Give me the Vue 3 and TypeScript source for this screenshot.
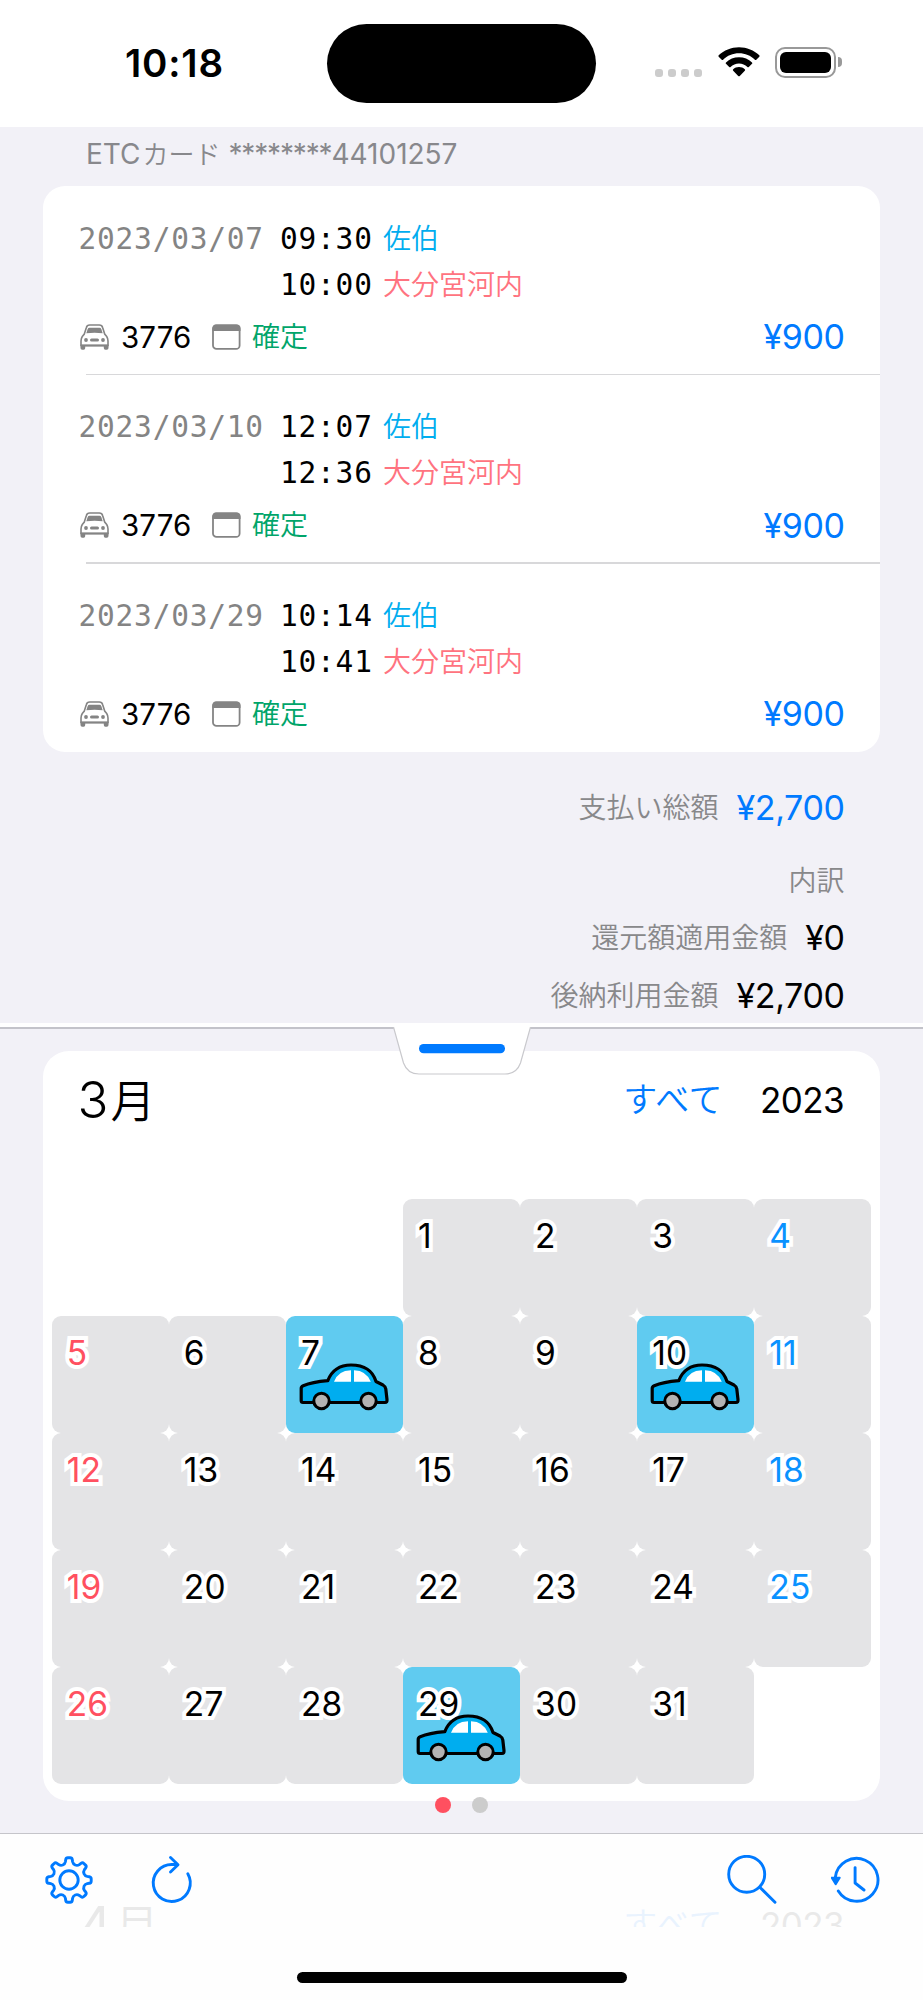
<script setup lang="ts">
interface Trip {
  date: string
  entryTime: string
  entry: string
  exitTime: string
  exit: string
  car: string
  status: string
  fee: string
}

interface Day {
  n: number
  weekday: number
  trip: boolean
}

const trips: Trip[] = [
  ['2023/03/07', '09:30', '10:00'],
  ['2023/03/10', '12:07', '12:36'],
  ['2023/03/29', '10:14', '10:41'],
].map(([date, entryTime, exitTime]) => ({
  date,
  entryTime,
  exitTime,
  entry: '佐伯',
  exit: '大分宮河内',
  car: '3776',
  status: '確定',
  fee: '¥900',
}))

const firstWeekday = 3
const tripDays = [7, 10, 29]
const days: Day[] = Array.from({ length: 31 }, (_, i) => ({
  n: i + 1,
  weekday: (i + firstWeekday) % 7,
  trip: tripDays.includes(i + 1),
}))

function polar(x: number, y: number, deg: number): string {
  const a = (deg * Math.PI) / 180
  const px = x * Math.cos(a) - y * Math.sin(a)
  const py = x * Math.sin(a) + y * Math.cos(a)
  return `${px.toFixed(2)} ${py.toFixed(2)}`
}

// Eight rounded teeth joined by shallow valleys.
function gearPath(): string {
  let d = ''
  for (let i = 0; i < 8; i++) {
    const p = (x: number, y: number) => polar(x, y, i * 45)
    d += `${i ? 'L' : 'M'}${p(-3.6, -18.2)}L${p(-3.3, -20.2)}Q${p(-3, -22.2)} ${p(-1.2, -22.2)}L${p(1.2, -22.2)}`
    d += `Q${p(3, -22.2)} ${p(3.3, -20.2)}L${p(3.6, -18.2)}Q${p(4.1, -15.9)} ${p(6.2, -15)}`
    d += `Q${p(8.4, -14.1)} ${polar(-3.6, -18.2, (i + 1) * 45)}`
  }
  return d + 'Z'
}
const gear = gearPath()
</script>

<template>
  <main class="screen">
    <header class="status">
      <div class="clock">10:18</div>
      <div class="island"></div>
      <div class="signals">
        <div class="cell-dots"><i v-for="k in 4" :key="k"></i></div>
        <svg class="wifi" width="42" height="30" viewBox="0 0 42 30">
          <path d="M21 0.3C13.2 0.3 6 3.3 0.7 8.3q-.7.7 0 1.4l3 3q.7.7 1.4 0C9.300 8.600 14.900 6.300 21 6.300s11.700 2.300 15.900 6.400q.7.700 1.400 0l3-3q.7-.7 0-1.400C36 3.300 28.800.3 21 .3z" />
          <path d="M21 10.300c-5 0-9.600 1.900-13 5.100q-.8.700 0 1.400l3.200 3.100q.7.700 1.400 0c2.200-2 5.200-3.300 8.400-3.300s6.200 1.300 8.400 3.300q.7.700 1.400 0l3.200-3.100q.8-.7 0-1.400c-3.400-3.200-8-5.100-13-5.100z" />
          <path d="M21 20.100c-2.300 0-4.300.9-5.800 2.200q-.8.700 0 1.400l5 5.200q.8.800 1.600 0l5-5.200q.8-.7 0-1.400c-1.500-1.300-3.500-2.200-5.800-2.200z" />
        </svg>
        <div class="battery"><div class="shell"><div class="charge"></div></div><i class="nub"></i></div>
      </div>
    </header>

    <section class="history">
      <h2 class="card-name">ETC<span class="kana">カード</span> <span class="stars">********</span>44101257</h2>
      <div class="panel trips">
        <article v-for="trip in trips" :key="trip.date" class="trip">
          <div class="times">
            <span class="mono date">{{ trip.date }}</span>
            <span class="mono">{{ trip.entryTime }}</span>
            <span class="jp entry">{{ trip.entry }}</span>
          </div>
          <div class="times">
            <span class="mono date"></span>
            <span class="mono">{{ trip.exitTime }}</span>
            <span class="jp exit">{{ trip.exit }}</span>
          </div>
          <div class="meta">
            <svg class="front-car" width="29" height="26" viewBox="0 0 29 26">
              <path d="M4.300 10 6.300 3.700Q7 1 9.700 1h9.600Q22 1 22.700 3.700l2 6.300 2 2.500q1.300 2 1.300 4.500v4.500H1V17q0-2.500 1.300-4.500z" fill="none" stroke="#848484" stroke-width="1.600" />
              <path d="M6.300 9.200 7.700 5q.5-1.300 1.800-1.300h10q1.300 0 1.800 1.300l1.400 4.200q-8-.8-16.400 0zM.5 20.500h28V24q0 1.800-1.700 1.800h-1.500q-1.500 0-1.500-1.800v-1.500H5.200V24q0 1.800-1.500 1.800H2.200Q.5 25.800.5 24z" fill="#848484" />
              <circle cx="6" cy="16" r="1.900" fill="#848484" />
              <circle cx="23" cy="16" r="1.900" fill="#848484" />
              <rect x="10" y="14.500" width="9" height="3" rx="1.500" fill="#848484" />
            </svg>
            <span class="car-no">{{ trip.car }}</span>
            <svg class="window" width="29" height="26" viewBox="0 0 29 26">
              <rect x="1" y="1.300" width="26.600" height="23.600" rx="3.500" fill="none" stroke="#848484" stroke-width="1.800" />
              <path d="M.5 7V4q0-3.500 3.500-3.500h20.500Q28.500.5 28.500 4v3z" fill="#848484" />
            </svg>
            <span class="jp state">{{ trip.status }}</span>
            <span class="fee">{{ trip.fee }}</span>
          </div>
        </article>
      </div>
      <div class="totals">
        <div class="total"><span class="jp">支払い総額</span><b class="blue">¥2,700</b></div>
        <div class="total head"><span class="jp">内訳</span></div>
        <div class="total"><span class="jp">還元額適用金額</span><b>¥0</b></div>
        <div class="total"><span class="jp">後納利用金額</span><b>¥2,700</b></div>
      </div>
    </section>

    <section class="calendar">
      <svg class="grip" width="140" height="49" viewBox="0 0 140 49">
        <path d="M1.500 0 11.500 36Q15.500 47 27 47H113Q124.500 47 128.500 36L138.500 0" fill="#fff" stroke="#c9c9cd" stroke-width="1.200" />
        <rect x="27" y="17" width="86" height="9.300" rx="4.600" fill="#007aff" />
      </svg>
      <div class="panel month">
        <div class="month-head">
          <h1><span>3</span><span class="jp tsuki">月</span></h1>
          <span class="jp all">すべて</span>
          <span class="year">2023</span>
        </div>
        <div class="days">
          <div
            v-for="day in days"
            :key="day.n"
            class="day"
            :class="{ first: day.n === 1, sun: day.weekday === 0, sat: day.weekday === 6, busy: day.trip }"
          >
            <span class="num">{{ day.n }}</span>
            <svg v-if="day.trip" class="side-car" width="90" height="48" viewBox="0 0 90 48">
              <path d="M4 39.500Q2.200 39.500 2.200 37.500V25.500Q2.200 23.500 4.200 22.700 13 19 28.800 17.600 35 2 52 2 72 2 77 18.500L84 22Q86.500 23.500 86.800 26L88 36.500Q88.300 39.500 86 39.500Z" fill="#00adef" stroke="#000" stroke-width="3.200" stroke-linejoin="round" />
              <path d="M35 18.800Q39 7.400 52 7.200V18.800ZM55 7.200Q67.500 7.600 71.800 18.800H55Z" fill="#fff" />
              <circle cx="22.500" cy="38" r="7.700" fill="#b3b3b3" stroke="#000" stroke-width="3" />
              <circle cx="69.500" cy="38" r="7.700" fill="#b3b3b3" stroke="#000" stroke-width="3" />
            </svg>
          </div>
        </div>
      </div>
      <div class="pager"><i class="on"></i><i></i></div>
    </section>

    <footer class="toolbar">
      <div class="next-month">
        <span class="next-name">4<span class="jp tsuki">月</span></span>
        <span class="jp all">すべて</span>
        <span class="year">2023</span>
      </div>
      <nav class="icons">
        <svg width="50" height="50" viewBox="-25 -25 50 50">
          <path :d="gear" />
          <circle r="9.200" />
        </svg>
        <svg class="refresh" width="50" height="50" viewBox="-25 -25 50 50">
          <path d="M15.800-6.200A18.500 18.500 0 1 1 0-15.500H5.500M-1.500-22.500 6-15.300-1.500-8" />
        </svg>
        <svg class="search" width="50" height="50" viewBox="-25 -25 50 50">
          <circle cx="-5.300" cy="-5.700" r="18" />
          <path d="M7.800 7.200 23 22.300" />
        </svg>
        <svg class="recent" width="50" height="50" viewBox="-25 -25 50 50">
          <path d="M-20.700-2.500A21.400 21.400 0 1 1-17.700 11M-.9-12.400V3L8 10" />
          <path d="M-24.300-2.300h8L-20.300 4.200z" fill="#007aff" stroke-width="2" />
        </svg>
      </nav>
      <div class="home"></div>
    </footer>
  </main>
</template>

<style>
body {
  background: #fff;
}
</style>

<style scoped>
.screen {
  width: 923px;
  height: 2000px;
  overflow: hidden;
  display: flex;
  flex-direction: column;
  background: #f2f1f7;
  color: #000;
  font-family: Inter, "Noto Sans CJK JP", sans-serif;
  font-weight: 400;
}
.screen * {
  box-sizing: border-box;
}
h1,
h2 {
  margin: 0;
  font-weight: 400;
}
.jp {
  font-family: Inter, "Noto Sans CJK JP", sans-serif;
  font-weight: 350;
}
.status {
  flex: none;
  height: 126.500px;
  background: #fff;
  display: grid;
  grid-template-columns: 327px 269px 1fr;
  align-items: start;
}
.clock {
  padding: 40px 0 0 125px;
  font-size: 38.500px;
  line-height: 46px;
  font-weight: 600;
  letter-spacing: 0.800px;
}
.island {
  margin-top: 24px;
  height: 79px;
  border-radius: 40px;
  background: #000;
}
.signals {
  display: flex;
  margin: 46.500px 0 0 59px;
  height: 31px;
}
.cell-dots {
  display: flex;
  gap: 5px;
  padding-top: 22.500px;
  width: 63px;
}
.cell-dots i {
  width: 8px;
  height: 8px;
  border-radius: 3px;
  background: #ccc;
}
.battery {
  display: flex;
  align-items: center;
  margin-left: 15px;
}
.shell {
  width: 61px;
  height: 31px;
  border: 2px solid #999;
  border-radius: 10px;
  padding: 3px;
}
.charge {
  height: 100%;
  border-radius: 6px;
  background: #000;
}
.nub {
  width: 4px;
  height: 10px;
  margin-left: 2px;
  border-radius: 0 4px 4px 0;
  background: #999;
}
.history {
  flex: none;
  height: 896.500px;
}
.card-name {
  height: 59.500px;
  padding-left: 86px;
  font-size: 28px;
  line-height: 54px;
  color: #88888c;
  white-space: pre;
}
.kana {
  font-size: 26px;
  font-weight: 350;
  margin-left: 2px;
}
.stars {
  letter-spacing: -1.150px;
}
.panel {
  width: 837px;
  margin-left: 43px;
  background: #fff;
  border-radius: 22px;
}
.trip {
  position: relative;
  height: 188.600px;
  padding: 29.500px 36px 0 36px;
}
.trip + .trip::before {
  content: "";
  position: absolute;
  top: -1px;
  left: 43px;
  right: 0;
  height: 1.500px;
  background: #d8d8da;
}
.times {
  display: flex;
  height: 46px;
  line-height: 46px;
}
.mono {
  font-family: "DejaVu Sans Mono", monospace;
  font-size: 29.500px;
  letter-spacing: 0.780px;
  width: 103px;
  white-space: nowrap;
}
.mono.date {
  width: 201.500px;
  margin-left: -0.500px;
  color: #848484;
}
.times .jp {
  font-size: 28px;
}
.entry {
  color: #00adef;
}
.exit {
  color: #ff7380;
}
.meta {
  display: flex;
  align-items: center;
  height: 44px;
  margin-top: 7px;
  padding-left: 1px;
}
.car-no {
  margin-left: 12px;
  width: 91px;
  font-size: 29.500px;
  letter-spacing: 0.100px;
}
.state {
  margin-left: 11px;
  font-size: 28px;
  line-height: 44px;
  color: #00a56a;
}
.fee {
  margin-left: auto;
  margin-right: -0.500px;
  font-size: 34px;
  letter-spacing: -0.400px;
  color: #007aff;
}
.totals {
  padding: 31.500px 78.500px 0 0;
}
.total {
  display: flex;
  justify-content: flex-end;
  height: 50px;
  line-height: 50px;
  margin-bottom: 8px;
}
.total:first-child {
  margin-bottom: 22.500px;
}
.total .jp {
  font-size: 28px;
  color: #88888a;
}
.total.head {
  margin-bottom: 7.500px;
}
.total b {
  margin-left: 18px;
  font-size: 34px;
  font-weight: 400;
  letter-spacing: -0.400px;
}
.total .blue {
  color: #007aff;
}
.calendar {
  position: relative;
  flex: none;
  height: 810px;
  padding-top: 24px;
  border-top: 4.500px solid #fff;
}
.calendar::before {
  content: "";
  position: absolute;
  top: 0;
  left: 0;
  right: 0;
  height: 1.500px;
  background: #c3c3ca;
}
.grip {
  position: absolute;
  top: -0.500px;
  left: 391.500px;
}
.month {
  height: 750px;
  border-radius: 26px;
}
.month-head {
  display: flex;
  height: 147.500px;
  padding: 0 36px 0 34.500px;
  line-height: 98px;
}
h1 {
  flex: 1;
  font-size: 51px;
  font-weight: 350;
}
.tsuki {
  font-size: 45px;
  margin-left: 2px;
}
.all {
  font-size: 34px;
  letter-spacing: 0.500px;
  color: #007aff;
}
.year {
  margin-left: 37px;
  font-size: 35px;
  letter-spacing: -0.600px;
}
.days {
  display: grid;
  grid-template-columns: repeat(7, 117.100px);
  grid-auto-rows: 117.100px;
  margin-left: 8.700px;
}
.day {
  position: relative;
  padding: 17px 0 0 15px;
  border-radius: 9px;
  background: #e4e4e6;
}
.first {
  grid-column-start: 4;
}
.num {
  display: block;
  font-size: 33.500px;
  line-height: 40px;
  letter-spacing: 0.200px;
  -webkit-text-stroke: 8px #fff;
  paint-order: stroke fill;
  stroke-linejoin: round;
}
.sun {
  color: #ff5060;
}
.sat {
  color: #0a92ff;
}
.busy {
  background: #60cbf0;
}
.side-car {
  position: absolute;
  left: 13px;
  top: 47.500px;
}
.pager {
  position: relative;
  display: flex;
  justify-content: center;
  gap: 21px;
  margin-top: -4.500px;
}
.pager i {
  width: 16px;
  height: 16px;
  border-radius: 50%;
  background: #ccc;
}
.pager .on {
  background: #ff5060;
}
.toolbar {
  position: relative;
  flex: 1;
  border-top: 1.500px solid #c5c5ca;
  background: #fefefe;
}
.next-month {
  position: absolute;
  top: 0;
  left: 79px;
  right: 79px;
  height: 93px;
  overflow: hidden;
  display: flex;
  padding-top: 42px;
  line-height: 98px;
  opacity: 0.080;
}
.next-name {
  flex: 1;
  font-size: 51px;
}
.icons {
  display: flex;
  padding: 20.500px 42px 0 44px;
}
.icons svg {
  position: relative;
  fill: none;
  stroke: #007aff;
  stroke-width: 2.900;
  stroke-linecap: round;
  stroke-linejoin: round;
}
.refresh {
  margin-left: 53px;
}
.search {
  margin-left: auto;
}
.recent {
  margin-left: 54px;
}
.home {
  width: 330px;
  height: 11px;
  margin: 67px auto 0;
  border-radius: 6px;
  background: #000;
}
</style>
